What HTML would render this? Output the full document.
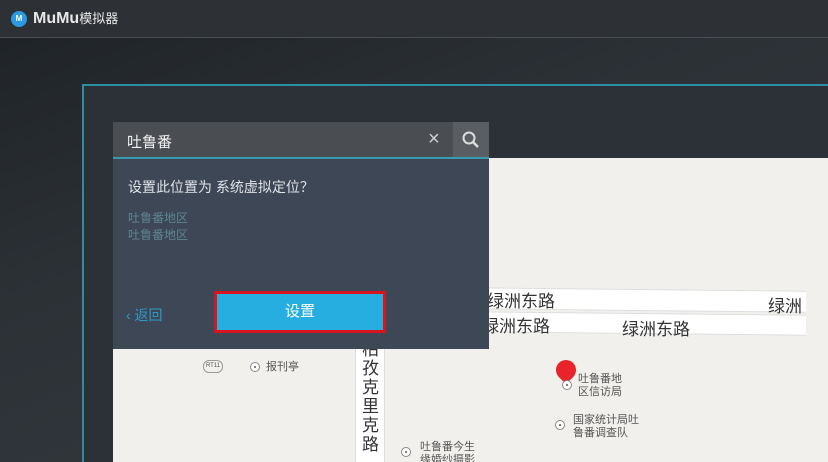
<!DOCTYPE html>
<html style="width:828px;height:462px;overflow:hidden"><head><meta charset="utf-8"><style>
*{margin:0;padding:0;box-sizing:border-box}
body{width:828px;height:462px;overflow:hidden;position:relative;font-family:"Liberation Sans","Noto Sans CJK SC",sans-serif;background:linear-gradient(160deg,#1e2226 0%,#2c3136 40%,#363b41 100%)}
.abs{position:absolute}
.top{left:0;top:0;width:828px;height:38px;background:#2d3035;border-bottom:1px solid #4a4d52}
.road{background:#fff;border-top:1px solid #ddd;border-bottom:1px solid #ddd}
.rt{font-size:17px;color:#333;position:absolute;white-space:nowrap}
.poi{font-size:11px;color:#555;position:absolute;line-height:13px}
.dot{position:absolute;width:10px;height:10px;border:1px solid #888;border-radius:50%;background:#fff}
.dot:after{content:"";position:absolute;left:3px;top:3px;width:2px;height:2px;background:#555;border-radius:50%}
</style></head><body>
<div class="abs top"></div>
<div class="abs" style="left:11px;top:11px;width:16px;height:16px;border-radius:50%;background:#2a9be0;color:#fff;font-size:8px;font-weight:bold;text-align:center;line-height:16px">M</div>
<div class="abs" style="left:33px;top:8px;color:#e8e8e8;font-size:16px;font-weight:bold">MuMu<span style="font-size:13px;font-weight:normal">模拟器</span></div>
<div class="abs" style="left:82px;top:84px;width:746px;height:378px;border-left:2px solid #2d8ea3;border-top:2px solid #2d8ea3;background:#2c3138"></div>
<div class="abs" style="left:113px;top:158px;width:715px;height:304px;background:#f2f0ed"></div>
<div class="abs road" style="left:470px;top:289px;width:336px;height:22px;transform:rotate(0.6deg)"></div>
<div class="abs road" style="left:470px;top:313px;width:336px;height:21px;transform:rotate(0.6deg)"></div>
<div class="rt" style="left:487px;top:287px">绿洲东路</div>
<div class="rt" style="left:768px;top:292px">绿洲</div>
<div class="rt" style="left:482px;top:312px">绿洲东路</div>
<div class="rt" style="left:622px;top:315px">绿洲东路</div>
<div class="abs" style="left:355px;top:340px;width:30px;height:122px;background:#fff;border-left:1px solid #ddd;border-right:1px solid #ddd"></div>
<div class="rt" style="left:362px;top:340px;width:18px;line-height:19px;white-space:normal">柏孜克里克路</div>
<div class="abs" style="left:203px;top:360px;width:20px;height:13px;border:1px solid #999;border-radius:6px;font-size:6px;color:#555;text-align:center;line-height:11px">RT11</div>
<div class="dot" style="left:250px;top:362px"></div>
<div class="poi" style="left:266px;top:361px">报刊亭</div>
<div class="abs" style="left:556px;top:360px;width:20px;height:20px;background:#e8242a;border-radius:50% 50% 50% 0;transform:rotate(-45deg)"></div>
<div class="dot" style="left:562px;top:380px"></div>
<div class="poi" style="left:578px;top:373px">吐鲁番地<br>区信访局</div>
<div class="dot" style="left:555px;top:420px"></div>
<div class="poi" style="left:573px;top:414px">国家统计局吐<br>鲁番调查队</div>
<div class="dot" style="left:401px;top:447px"></div>
<div class="poi" style="left:420px;top:441px">吐鲁番今生<br>缘婚纱摄影</div>
<div class="abs" style="left:113px;top:122px;width:376px;height:35px;background:#4a4d52"></div>
<div class="abs" style="left:453px;top:122px;width:36px;height:35px;background:#5a5d62"></div>
<div class="abs" style="left:127px;top:131px;color:#f0f0f0;font-size:15px">吐鲁番</div>
<div class="abs" style="left:428px;top:128px;color:#d0d0d0;font-size:20px">×</div>
<svg class="abs" style="left:461px;top:130px" width="20" height="20" viewBox="0 0 20 20"><circle cx="8" cy="8" r="5.5" fill="none" stroke="#ddd" stroke-width="2"/><line x1="12" y1="12" x2="17" y2="17" stroke="#ddd" stroke-width="2.5"/></svg>
<div class="abs" style="left:113px;top:157px;width:376px;height:2px;background:#3a9bb0"></div>
<div class="abs" style="left:113px;top:159px;width:376px;height:190px;background:#3d4756"></div>
<div class="abs" style="left:128px;top:177px;color:#dfe3e8;font-size:14px">设置此位置为 系统虚拟定位？</div>
<div class="abs" style="left:128px;top:210px;color:#5f8590;font-size:12px;line-height:17px">吐鲁番地区<br>吐鲁番地区</div>
<div class="abs" style="left:126px;top:305px;color:#2a9bc8;font-size:14px">‹ 返回</div>
<div class="abs" style="left:214px;top:291px;width:172px;height:42px;border:3px solid #d8141c;background:#27aee0;color:#fff;font-size:15px;text-align:center;line-height:36px">设置</div>
</body></html>
